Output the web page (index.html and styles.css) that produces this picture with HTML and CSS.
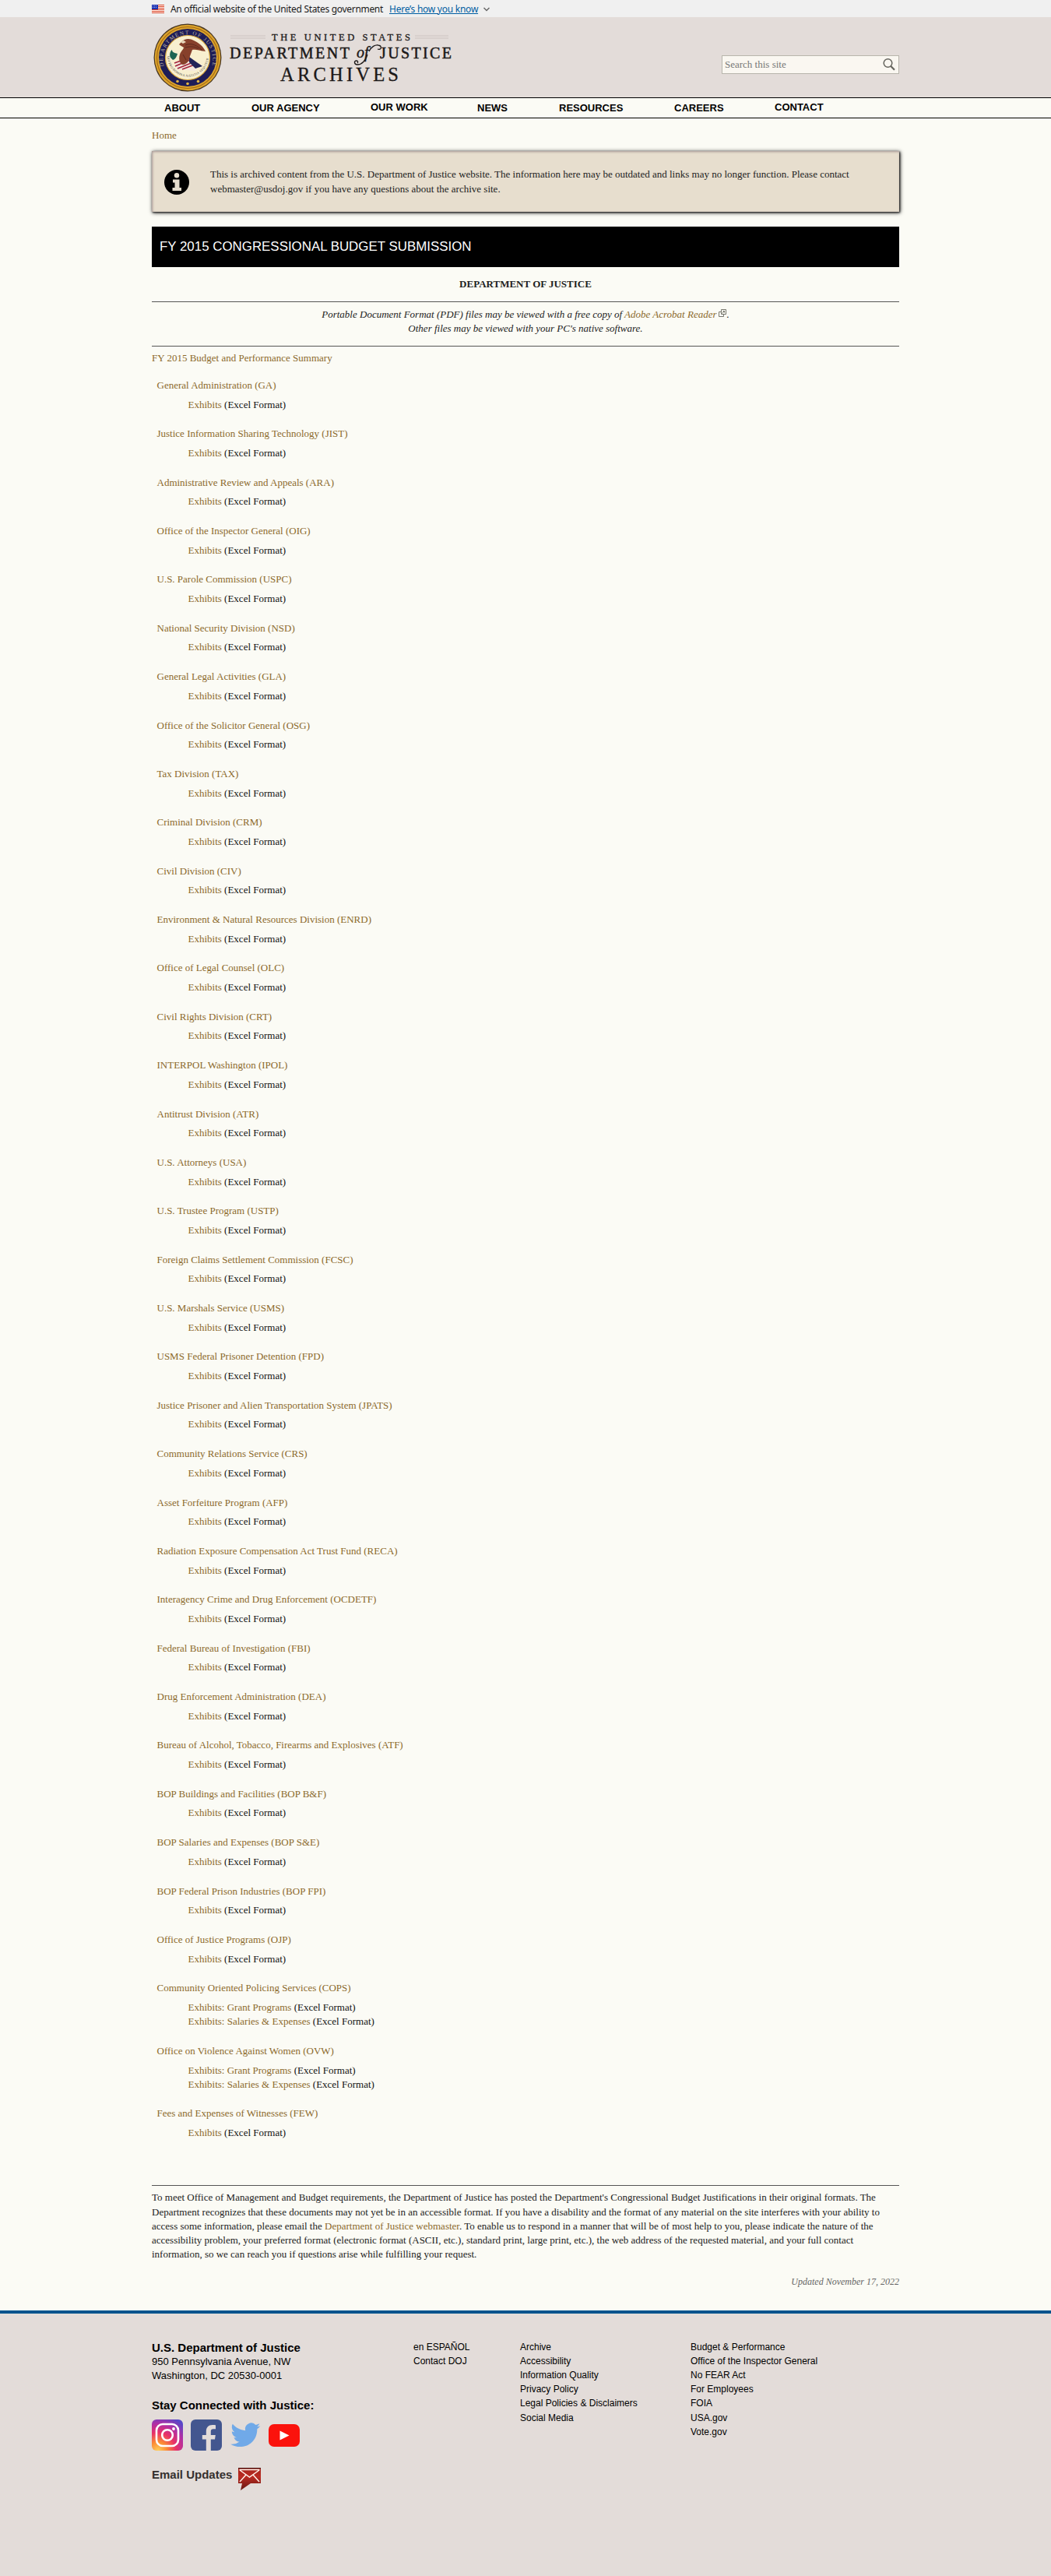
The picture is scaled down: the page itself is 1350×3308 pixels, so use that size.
FILE: index.html
```html
<!DOCTYPE html>
<html lang="en">
<head>
<meta charset="utf-8">
<title>FY 2015 Congressional Budget Submission</title>
<link rel="stylesheet" href="styles.css">
</head>
<body>
<div class="gov-banner">
  <div class="container gov-inner">
    <svg class="flag" width="16" height="11" viewBox="0 0 16 11"><rect width="16" height="11" fill="#fff"/><path d="M0 .5h16M0 2.5h16M0 4.5h16M0 6.5h16M0 8.5h16M0 10.5h16" stroke="#db3e1f"/><rect width="8" height="6" fill="#1e33b1"/><path d="M1 1.5h6M1 3.5h6" stroke="#a5b4ee" stroke-dasharray="1 1"/></svg>
    <span class="gov-text">An official website of the United States government</span>
    <a class="gov-link" href="#">Here’s how you know</a>
    <svg width="10" height="8" viewBox="0 0 10 8"><path d="M1.500 2l3.500 3.500L8.500 2" fill="none" stroke="#686868" stroke-width="1.500"/></svg>
  </div>
</div>
<header class="site-header">
  <div class="container header-inner">
    <svg class="logo" width="390" height="96" viewBox="0 0 390 96">
      <defs>
        <path id="arc-top" d="M15.500 57A32 32 0 1 1 77 57"/>
        <path id="arc-bottom" d="M20 44A26.500 26.500 0 1 0 73 44"/>
      </defs>
      <circle cx="46" cy="46" r="43.500" fill="#463421"/>
      <circle cx="46" cy="46" r="42.300" fill="#dca42c"/>
      <circle cx="46" cy="46" r="39.500" fill="none" stroke="#a56a16" stroke-width="1.200"/>
      <circle cx="46" cy="46" r="37" fill="#1f1d57"/>
      <circle cx="46" cy="46" r="28.500" fill="#f8efcf" stroke="#d7a63a" stroke-width="1.200"/>
      <text class="seal-name"><textPath href="#arc-top" textLength="117">DEPARTMENT OF JUSTICE</textPath></text>
      <text class="seal-motto"><textPath href="#arc-bottom" textLength="80">QUI PRO DOMINA JUSTITIA SEQUITUR</textPath></text>
      <path d="M30 52l19-2 10 7-3 6-24-2z" fill="#f4e8df"/>
      <path d="M29 53l14-5M30 57l19-8M33 60l20-8M39 61l16-6" stroke="#a3263c" stroke-width="1.700"/>
      <path d="M48 45l17 12-9 3-8-8z" fill="#222459"/>
      <path d="M24 46c-2-4 0-9 2-10 0 3 3 4 7 5-1 3-2 7-6 8z" fill="#1e6653"/>
      <path d="M38 26c4-5 11-5 16-2 8 4 12 8 15 14-7-1-14-3-17-2l-3 8c-1 7-5 11-9 11-4-1-6-7-4-13 1-4 5-7 5-9-2-1-5-3-6-4z" fill="#87402b"/>
      <path d="M43 30c8-4 16 1 22 7M43 33c8-2 13-1 17 2M40 42l4 7" stroke="#5c281d" fill="none"/>
      <path d="M37 26l4-2 3 2-4 2z" fill="#e9d9bd"/>
      <g fill="#e3b543"><circle cx="33" cy="76.500" r="1.800"/><circle cx="46" cy="79.500" r="1.800"/><circle cx="59.500" cy="76.500" r="1.800"/></g>
      <path d="M101 17.500h45M101 19.500h45M101 21.500h45M338 17.500h43M338 19.500h43M338 21.500h43" stroke="#d0c8c5" stroke-width=".8"/>
      <g fill="#1b1818" stroke="#1b1818">
        <text class="mark-top" x="154" y="23.500" textLength="178">THE UNITED STATES</text>
        <text class="mark-main" x="100" y="46.500" textLength="154">DEPARTMENT</text>
        <text class="mark-of" x="263" y="46">of</text>
        <text class="mark-main" x="293" y="46.500" textLength="92">JUSTICE</text>
        <text class="mark-sub" x="165" y="76" textLength="152">ARCHIVES</text>
      </g>
      <path d="M279 38c3-6 8-9 12-8 5 1 4 7-1 5M277 42c-3 9-7 13-13 13-4 0-5-5-1-5 2 0 2 2 1 3" fill="none" stroke="#1b1818" stroke-width="1.300"/>
    </svg>
    <form class="search">
      <span>Search this site</span>
      <svg width="18" height="18" viewBox="0 0 18 18"><circle cx="7.500" cy="7" r="5.300" fill="none" stroke="#65645d" stroke-width="1.500"/><path d="M11.300 11l4.700 4.700" stroke="#65645d" stroke-width="2.200"/></svg>
    </form>
  </div>
</header>
<nav class="main-nav">
  <div class="container nav-inner">
    <a>ABOUT</a><a>OUR AGENCY</a><a class="raised">OUR WORK</a><a>NEWS</a><a>RESOURCES</a><a>CAREERS</a><a class="raised">CONTACT</a>
  </div>
</nav>
<main class="container">
  <div class="breadcrumb"><a href="#">Home</a></div>
  <div class="notice">
    <svg width="32" height="32" viewBox="0 0 32 32"><circle cx="16" cy="16" r="16"/><circle cx="16" cy="7.300" r="3.200" fill="#e7dece"/><path d="M11 12.500h8.500v10.500h2.500v4H10.500v-4h3v-6.500H11z" fill="#e7dece"/></svg>
    <p>This is archived content from the U.S. Department of Justice website. The information here may be outdated and links may no longer function. Please contact webmaster@usdoj.gov if you have any questions about the archive site.</p>
  </div>
  <h1>FY 2015 CONGRESSIONAL BUDGET SUBMISSION</h1>
  <p class="dept">DEPARTMENT OF JUSTICE</p>
  <div class="format-note">Portable Document Format (PDF) files may be viewed with a free copy of <a href="#">Adobe Acrobat Reader</a><svg class="ext" width="12" height="11" viewBox="0 0 12 11"><path d="M4.500 3.500h-3v6h6v-3M4.500 .5h6v6h-6zM5.500 5.500l3-3M6.500 2.500H8.500V4.500" fill="none" stroke="#77776d"/></svg>.<br>Other files may be viewed with your PC's native software.</div>
  <p class="summary"><a href="#">FY 2015 Budget and Performance Summary</a></p>
  <dl class="budget">
    <dt><a href="#">General Administration (GA)</a></dt><dd><a href="#">Exhibits</a> (Excel Format)</dd>
    <dt><a href="#">Justice Information Sharing Technology (JIST)</a></dt><dd><a href="#">Exhibits</a> (Excel Format)</dd>
    <dt><a href="#">Administrative Review and Appeals (ARA)</a></dt><dd><a href="#">Exhibits</a> (Excel Format)</dd>
    <dt><a href="#">Office of the Inspector General (OIG)</a></dt><dd><a href="#">Exhibits</a> (Excel Format)</dd>
    <dt><a href="#">U.S. Parole Commission (USPC)</a></dt><dd><a href="#">Exhibits</a> (Excel Format)</dd>
    <dt><a href="#">National Security Division (NSD)</a></dt><dd><a href="#">Exhibits</a> (Excel Format)</dd>
    <dt><a href="#">General Legal Activities (GLA)</a></dt><dd><a href="#">Exhibits</a> (Excel Format)</dd>
    <dt><a href="#">Office of the Solicitor General (OSG)</a></dt><dd><a href="#">Exhibits</a> (Excel Format)</dd>
    <dt><a href="#">Tax Division (TAX)</a></dt><dd><a href="#">Exhibits</a> (Excel Format)</dd>
    <dt><a href="#">Criminal Division (CRM)</a></dt><dd><a href="#">Exhibits</a> (Excel Format)</dd>
    <dt><a href="#">Civil Division (CIV)</a></dt><dd><a href="#">Exhibits</a> (Excel Format)</dd>
    <dt><a href="#">Environment &amp; Natural Resources Division (ENRD)</a></dt><dd><a href="#">Exhibits</a> (Excel Format)</dd>
    <dt><a href="#">Office of Legal Counsel (OLC)</a></dt><dd><a href="#">Exhibits</a> (Excel Format)</dd>
    <dt><a href="#">Civil Rights Division (CRT)</a></dt><dd><a href="#">Exhibits</a> (Excel Format)</dd>
    <dt><a href="#">INTERPOL Washington (IPOL)</a></dt><dd><a href="#">Exhibits</a> (Excel Format)</dd>
    <dt><a href="#">Antitrust Division (ATR)</a></dt><dd><a href="#">Exhibits</a> (Excel Format)</dd>
    <dt><a href="#">U.S. Attorneys (USA)</a></dt><dd><a href="#">Exhibits</a> (Excel Format)</dd>
    <dt><a href="#">U.S. Trustee Program (USTP)</a></dt><dd><a href="#">Exhibits</a> (Excel Format)</dd>
    <dt><a href="#">Foreign Claims Settlement Commission (FCSC)</a></dt><dd><a href="#">Exhibits</a> (Excel Format)</dd>
    <dt><a href="#">U.S. Marshals Service (USMS)</a></dt><dd><a href="#">Exhibits</a> (Excel Format)</dd>
    <dt><a href="#">USMS Federal Prisoner Detention (FPD)</a></dt><dd><a href="#">Exhibits</a> (Excel Format)</dd>
    <dt><a href="#">Justice Prisoner and Alien Transportation System (JPATS)</a></dt><dd><a href="#">Exhibits</a> (Excel Format)</dd>
    <dt><a href="#">Community Relations Service (CRS)</a></dt><dd><a href="#">Exhibits</a> (Excel Format)</dd>
    <dt><a href="#">Asset Forfeiture Program (AFP)</a></dt><dd><a href="#">Exhibits</a> (Excel Format)</dd>
    <dt><a href="#">Radiation Exposure Compensation Act Trust Fund (RECA)</a></dt><dd><a href="#">Exhibits</a> (Excel Format)</dd>
    <dt><a href="#">Interagency Crime and Drug Enforcement (OCDETF)</a></dt><dd><a href="#">Exhibits</a> (Excel Format)</dd>
    <dt><a href="#">Federal Bureau of Investigation (FBI)</a></dt><dd><a href="#">Exhibits</a> (Excel Format)</dd>
    <dt><a href="#">Drug Enforcement Administration (DEA)</a></dt><dd><a href="#">Exhibits</a> (Excel Format)</dd>
    <dt><a href="#">Bureau of Alcohol, Tobacco, Firearms and Explosives (ATF)</a></dt><dd><a href="#">Exhibits</a> (Excel Format)</dd>
    <dt><a href="#">BOP Buildings and Facilities (BOP B&amp;F)</a></dt><dd><a href="#">Exhibits</a> (Excel Format)</dd>
    <dt><a href="#">BOP Salaries and Expenses (BOP S&amp;E)</a></dt><dd><a href="#">Exhibits</a> (Excel Format)</dd>
    <dt><a href="#">BOP Federal Prison Industries (BOP FPI)</a></dt><dd><a href="#">Exhibits</a> (Excel Format)</dd>
    <dt><a href="#">Office of Justice Programs (OJP)</a></dt><dd><a href="#">Exhibits</a> (Excel Format)</dd>
    <dt><a href="#">Community Oriented Policing Services (COPS)</a></dt><dd><a href="#">Exhibits: Grant Programs</a> (Excel Format)<br><a href="#">Exhibits: Salaries &amp; Expenses</a> (Excel Format)</dd>
    <dt><a href="#">Office on Violence Against Women (OVW)</a></dt><dd><a href="#">Exhibits: Grant Programs</a> (Excel Format)<br><a href="#">Exhibits: Salaries &amp; Expenses</a> (Excel Format)</dd>
    <dt><a href="#">Fees and Expenses of Witnesses (FEW)</a></dt><dd><a href="#">Exhibits</a> (Excel Format)</dd>
  </dl>
  <p class="access">To meet Office of Management and Budget requirements, the Department of Justice has posted the Department's Congressional Budget Justifications in their original formats. The Department recognizes that these documents may not yet be in an accessible format. If you have a disability and the format of any material on the site interferes with your ability to access some information, please email the <a href="#">Department of Justice webmaster</a>. To enable us to respond in a manner that will be of most help to you, please indicate the nature of the accessibility problem, your preferred format (electronic format (ASCII, etc.), standard print, large print, etc.), the web address of the requested material, and your full contact information, so we can reach you if questions arise while fulfilling your request.</p>
  <p class="updated">Updated November 17, 2022</p>
</main>
<footer class="site-footer">
  <div class="container footer-grid">
    <div class="contact">
      <h2>U.S. Department of Justice</h2>
      <address>950 Pennsylvania Avenue, NW<br>Washington, DC 20530-0001</address>
      <h2 class="stay">Stay Connected with Justice:</h2>
      <div class="social">
        <svg width="40" height="40" viewBox="0 0 40 40"><defs><radialGradient id="ig" cx=".2" cy="1" r="1.150"><stop offset="0" stop-color="#ffd05a"/><stop offset=".25" stop-color="#fb8a35"/><stop offset=".5" stop-color="#e93166"/><stop offset=".75" stop-color="#b02fa5"/><stop offset="1" stop-color="#5747c8"/></radialGradient></defs><rect width="40" height="40" rx="6" fill="url(#ig)"/><g fill="none" stroke="#fff" stroke-width="2.600"><rect x="6" y="6" width="28" height="28" rx="8"/><circle cx="20" cy="20" r="6.800"/></g><circle cx="28" cy="12" r="1.900" fill="#fff"/></svg>
        <svg width="40" height="40" viewBox="0 0 40 40"><rect width="40" height="40" rx="6" fill="#43568f"/><path d="M19.800 40V25.500h-5V20h5v-4.500c0-5.500 3-8.500 8-8.500 2 0 3.500.1 4.200.3v5h-3c-2.300 0-3.200 1.200-3.200 3.200V20h6l-.8 5.500h-5.200V40z" fill="#e3dcd9"/></svg>
        <svg width="40" height="40" viewBox="0 0 24 24"><path d="M23.600 4.900c-.8.4-1.700.6-2.600.7.900-.6 1.600-1.500 2-2.500-.9.500-1.900.9-2.900 1.100a4.700 4.700 0 0 0-8 4.300C8.200 8.300 4.700 6.400 2.300 3.500c-1.200 2.100-.6 4.800 1.500 6.200-.8 0-1.500-.2-2.100-.6 0 2.300 1.600 4.200 3.700 4.700-.7.200-1.400.2-2.100.1.600 1.800 2.300 3.200 4.300 3.200A9.400 9.400 0 0 1 .7 19c8.200 5.100 20.500.6 20.500-11.700.9-.6 1.700-1.500 2.400-2.400z" fill="#70a9e8"/></svg>
        <svg width="40" height="40" viewBox="0 0 40 40"><rect y="6" width="40" height="29" rx="7" fill="#fb120c"/><path d="M14.500 14.500v12l12-6z" fill="#fff"/></svg>
      </div>
      <div class="email"><span>Email Updates</span>
        <svg width="30" height="30" viewBox="0 0 30 30"><defs><linearGradient id="mail" x2="0" y2="1"><stop stop-color="#a3241b"/><stop offset=".4" stop-color="#bb2b22"/><stop offset="1" stop-color="#661712"/></linearGradient></defs><path d="M0 0h29v20H16L3 29l2-9H0z" fill="url(#mail)"/><path d="M0 .6h29" stroke="#4a1411" stroke-width="1.200"/><path d="M1.500 2.500h26M2 3l12.500 9L27 3M2 18l8-9M27 18l-8-9" fill="none" stroke="#fff0e8" stroke-width="1.500"/></svg>
      </div>
    </div>
    <ul><li>en ESPAÑOL</li><li>Contact DOJ</li></ul>
    <ul><li>Archive</li><li>Accessibility</li><li>Information Quality</li><li>Privacy Policy</li><li>Legal Policies &amp; Disclaimers</li><li>Social Media</li></ul>
    <ul><li>Budget &amp; Performance</li><li>Office of the Inspector General</li><li>No FEAR Act</li><li>For Employees</li><li>FOIA</li><li>USA.gov</li><li>Vote.gov</li></ul>
  </div>
</footer>
</body>
</html>
```
FILE: styles.css
```css
* { box-sizing: border-box; }
body { margin: 0; background: #fbfbf5; color: #222; font: 13px/18.2px "Liberation Serif", serif; }
p, h1, h2, dl, dd, ul { margin: 0; padding: 0; }
a { color: #8c6a2c; text-decoration: none; }
svg { display: block; flex: none; }
.container { width: 960px; margin: 0 auto; }
.gov-banner { height: 22px; background: #f0f0f0; }
.gov-inner { display: flex; align-items: center; height: 23px; font: 12px/22px "Noto Sans", sans-serif; color: #1b1b1b; }
.gov-text { width: 274px; margin-left: 8px; margin-right: 7px; letter-spacing: -0.32px; white-space: nowrap; }
.gov-link { width: 117px; margin-right: 3px; color: #005ea2; text-decoration: underline; letter-spacing: -0.25px; white-space: nowrap; }
.site-header { height: 103px; background: #e3dcd9; }
.header-inner { display: flex; justify-content: space-between; align-items: flex-start; padding-top: 6px; }
.logo { font-family: "Liberation Serif", serif; }
.seal-name { font-size: 7px; fill: #bdb4a0; }
.seal-motto { font-size: 4px; fill: #3c3836; }
.mark-top { font-size: 12.5px; stroke-width: .3; }
.mark-main { font-size: 20px; stroke-width: .5; }
.mark-of { font-size: 20px; font-style: italic; stroke-width: .4; }
.mark-sub { font-size: 24.5px; stroke-width: .3; }
.search { display: flex; align-items: center; justify-content: space-between; width: 228px; height: 24px; margin-top: 43px; padding: 0 3px; border: 1px solid #b8b5ac; background: #faf7f1; color: #777; }
.main-nav { height: 27px; border: solid #000; border-width: 1px 0; }
.nav-inner { display: grid; grid-template-columns: 112px 153px 137px 105px 148px 129px 1fr; padding: 3px 0 0 16px; font: bold 13px/18px "Liberation Sans", sans-serif; }
.nav-inner a { color: #000; padding-top: 1px; }
.nav-inner .raised { padding-top: 0; }
.breadcrumb { height: 42px; padding-top: 13px; }
.notice { display: flex; align-items: flex-start; height: 78px; padding: 24px 60px 0 16px; background: #e7dece; box-shadow: 1px 1px 5px #111, 1px 1px 2px #444, inset 1px 1px 3px #a69695; }
.notice p { margin: -3px 0 0 27px; line-height: 18.6px; }
h1 { height: 52px; margin-top: 19px; padding-left: 10px; background: #000; color: #fff; font: 16.9px/52px "Liberation Sans", sans-serif; }
.dept { margin-top: 13px; font-weight: bold; text-align: center; }
.format-note { height: 58px; margin-top: 13px; padding-top: 7px; border: solid #555; border-width: 1px 0; text-align: center; font-style: italic; }
.ext { display: inline-block; margin-left: 1px; vertical-align: 0; }
.summary { margin-top: 6px; }
.budget { margin-top: 16.5px; }
dt { padding-left: 6.500px; }
dd { padding: 6.500px 0 0 46.500px; margin-bottom: 19.470px; color: #111; }
.access { margin-top: 58px; padding-top: 6px; border-top: 1px solid #555; }
.updated { margin-top: 17px; text-align: right; font-size: 12px; font-style: italic; color: #666; }
.site-footer { height: 342px; margin-top: 27px; border-top: 4px solid #00538d; background: #e3dcd9; color: #000; }
.footer-grid { display: grid; grid-template-columns: 336px 137px 219px 1fr; padding-top: 35px; font: 12px/18.2px "Liberation Sans", sans-serif; }
.footer-grid ul { margin-top: -1px; list-style: none; }
h2 { font: bold 15px/18px "Liberation Sans", sans-serif; }
address { font-style: normal; font-size: 13px; }
.stay { margin-top: 20px; }
.social { display: flex; gap: 10px; margin-top: 9px; }
.email { display: flex; gap: 8px; margin-top: 22px; font: bold 15px/18px "Liberation Sans", sans-serif; color: #35302e; }
```
